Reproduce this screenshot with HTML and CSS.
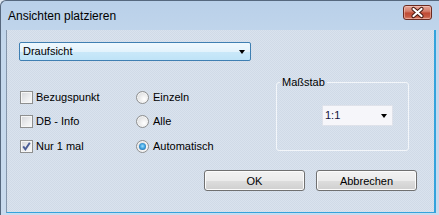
FILE: index.html
```html
<!DOCTYPE html>
<html>
<head>
<meta charset="utf-8">
<link rel="stylesheet" href="styles.css">
</head>
<body>
<div class="window">
  <div class="titlebar">
    <span class="title">Ansichten platzieren</span>
    <span class="close">
      <svg width="29" height="15" viewBox="0 0 29 15">
        <path d="M10.5 4 L18.5 11 M18.5 4 L10.5 11" stroke="#4a1a12" stroke-width="4.2" stroke-linecap="round" fill="none"/>
        <path d="M10.5 4 L18.5 11 M18.5 4 L10.5 11" stroke="#ffffff" stroke-width="2.2" stroke-linecap="round" fill="none"/>
      </svg>
    </span>
  </div>
  <div class="client">
    <div class="combo combo-main">
      <span class="combo-text">Draufsicht</span>
      <span class="arrow"></span>
    </div>
    <div class="middle">
      <div class="col col-check">
        <div class="row"><span class="cb"></span><span class="lbl">Bezugspunkt</span></div>
        <div class="row"><span class="cb"></span><span class="lbl">DB - Info</span></div>
        <div class="row"><span class="cb cb-checked">
          <svg width="11" height="11" viewBox="0 0 11 11"><path d="M2.2 5.4 L4.4 8.4 L8.8 1.8" stroke="#4a5d96" stroke-width="1.9" fill="none" stroke-linejoin="miter"/></svg>
        </span><span class="lbl">Nur 1 mal</span></div>
      </div>
      <div class="col col-radio">
        <div class="row"><span class="rb"></span><span class="lbl">Einzeln</span></div>
        <div class="row"><span class="rb"></span><span class="lbl">Alle</span></div>
        <div class="row"><span class="rb rb-on"><span class="dot"></span></span><span class="lbl">Automatisch</span></div>
      </div>
      <fieldset class="group">
        <legend class="group-title">Maßstab</legend>
        <div class="combo combo-scale">
          <span class="combo-text scale-text">1:1</span>
          <span class="arrow"></span>
        </div>
      </fieldset>
    </div>
    <div class="buttons">
      <button class="btn">OK</button>
      <button class="btn">Abbrechen</button>
    </div>
  </div>
</div>
</body>
</html>
```
FILE: styles.css
```css
* { box-sizing: border-box; }
html, body { margin: 0; padding: 0; }
body {
  width: 439px;
  height: 215px;
  overflow: hidden;
  font-family: "Liberation Sans", Arial, sans-serif;
  font-size: 11px;
  color: #000;
  background: #dfe8f2;
}
.window {
  width: 439px;
  height: 215px;
  display: flex;
  flex-direction: column;
  border-left: 1px solid #56687e;
  border-top: 1px solid #56687e;
  border-top-left-radius: 6px;
  background: linear-gradient(#b9d0e9 0%, #c3d7ec 20%, #c9dbee 100%);
}
.titlebar {
  height: 29px;
  flex: none;
  display: flex;
  align-items: center;
  justify-content: space-between;
  padding: 0 7px 0 7px;
}
.title {
  font-size: 12px;
  color: #000;
  margin-top: 1px;
}
.close {
  align-self: flex-start;
  margin-top: 4px;
  width: 29px;
  height: 15px;
  border: 1px solid #6b2a20;
  border-radius: 3px;
  background: linear-gradient(#e6a597 0%, #d47e6c 40%, #c04a34 55%, #c65a43 80%, #d9826d 100%);
  box-shadow: inset 0 0 0 1px rgba(255, 220, 210, 0.45);
  display: flex;
  align-items: center;
  justify-content: center;
  overflow: hidden;
}
.close svg { display: block; margin: -1px; }
.client {
  flex: 1;
  margin: 0 3px 2px 5px;
  border-left: 1px solid #8596ab;
  border-right: 2px solid #34a3dc;
  border-bottom: 1px solid #34a3dc;
  background-color: #d5dfeb;
  background-image: repeating-conic-gradient(#d0dae7 0 25%, #dae3ee 0 50%);
  background-size: 2px 2px;
  padding: 12px 17px 0 12px;
  display: flex;
  flex-direction: column;
}
.combo {
  display: flex;
  align-items: center;
  justify-content: space-between;
  border-radius: 2px;
}
.combo-main {
  width: 232px;
  height: 19px;
  border: 1px solid #3f7fb2;
  background: linear-gradient(#eff8fe 0%, #e3f3fc 50%, #c9e8f9 55%, #bfe3f7 100%);
  padding: 0 5px 0 3px;
}
.combo-text { line-height: 13px; }
.arrow {
  width: 0;
  height: 0;
  border-left: 3.5px solid transparent;
  border-right: 3.5px solid transparent;
  border-top: 4px solid #000;
}
.middle {
  display: flex;
  margin-top: 13px;
  height: 87px;
}
.col {
  display: flex;
  flex-direction: column;
  padding-top: 11px;
}
.col-check { width: 117px; padding-left: 1px; }
.col-radio { width: 140px; }
.row {
  height: 24.5px;
  display: flex;
  align-items: center;
  gap: 3px;
}
.cb {
  width: 13px;
  height: 13px;
  border: 1px solid #8e8f8f;
  background: linear-gradient(135deg, #d4d6da 0%, #ebecee 55%, #fbfbfb 100%);
  box-shadow: inset 0 0 0 1px #f6f6f6;
  display: flex;
  align-items: center;
  justify-content: center;
}
.cb svg { display: block; }
.rb {
  width: 13px;
  height: 13px;
  border-radius: 50%;
  border: 1px solid #8e8f8f;
  background: radial-gradient(circle at 65% 65%, #ffffff 0%, #eeeeee 40%, #cfd2d6 100%);
  box-shadow: inset 0 0 0 1px #f4f4f4;
  display: flex;
  align-items: center;
  justify-content: center;
  margin-right: 1px;
}
.dot {
  width: 7px;
  height: 7px;
  border-radius: 50%;
  background: radial-gradient(circle at 50% 45%, #9fe0ff 0%, #3fa3e0 45%, #124a86 100%);
}
.lbl { line-height: 13px; }
.group {
  margin: 2px 0 0 0;
  padding: 0;
  width: 133px;
  height: 75px;
  border: 1px solid #f3f6fa;
  border-radius: 3px;
  min-width: 0;
}
.group-title {
  margin-left: 3px;
  padding: 0 2px;
  line-height: 13px;
}
.combo-scale {
  width: 71px;
  height: 21px;
  margin: 16px 0 0 45px;
  border: 1px solid #dfe2ea;
  border-radius: 1px;
  background: #f6f6fa;
  padding: 0 5px 0 2px;
}
.scale-text { color: #14143c; }
.buttons {
  display: flex;
  justify-content: flex-end;
  gap: 11px;
  margin-top: 9px;
}
.btn {
  width: 101px;
  height: 21px;
  border: 1px solid #707070;
  border-radius: 3px;
  background: linear-gradient(#f2f2f2 0%, #ebebeb 50%, #dddddd 52%, #cfcfcf 100%);
  box-shadow: inset 0 0 0 1px #fbfbfb;
  font-family: "Liberation Sans", Arial, sans-serif;
  font-size: 11px;
  color: #000;
  padding: 0;
  margin: 0;
}
```
